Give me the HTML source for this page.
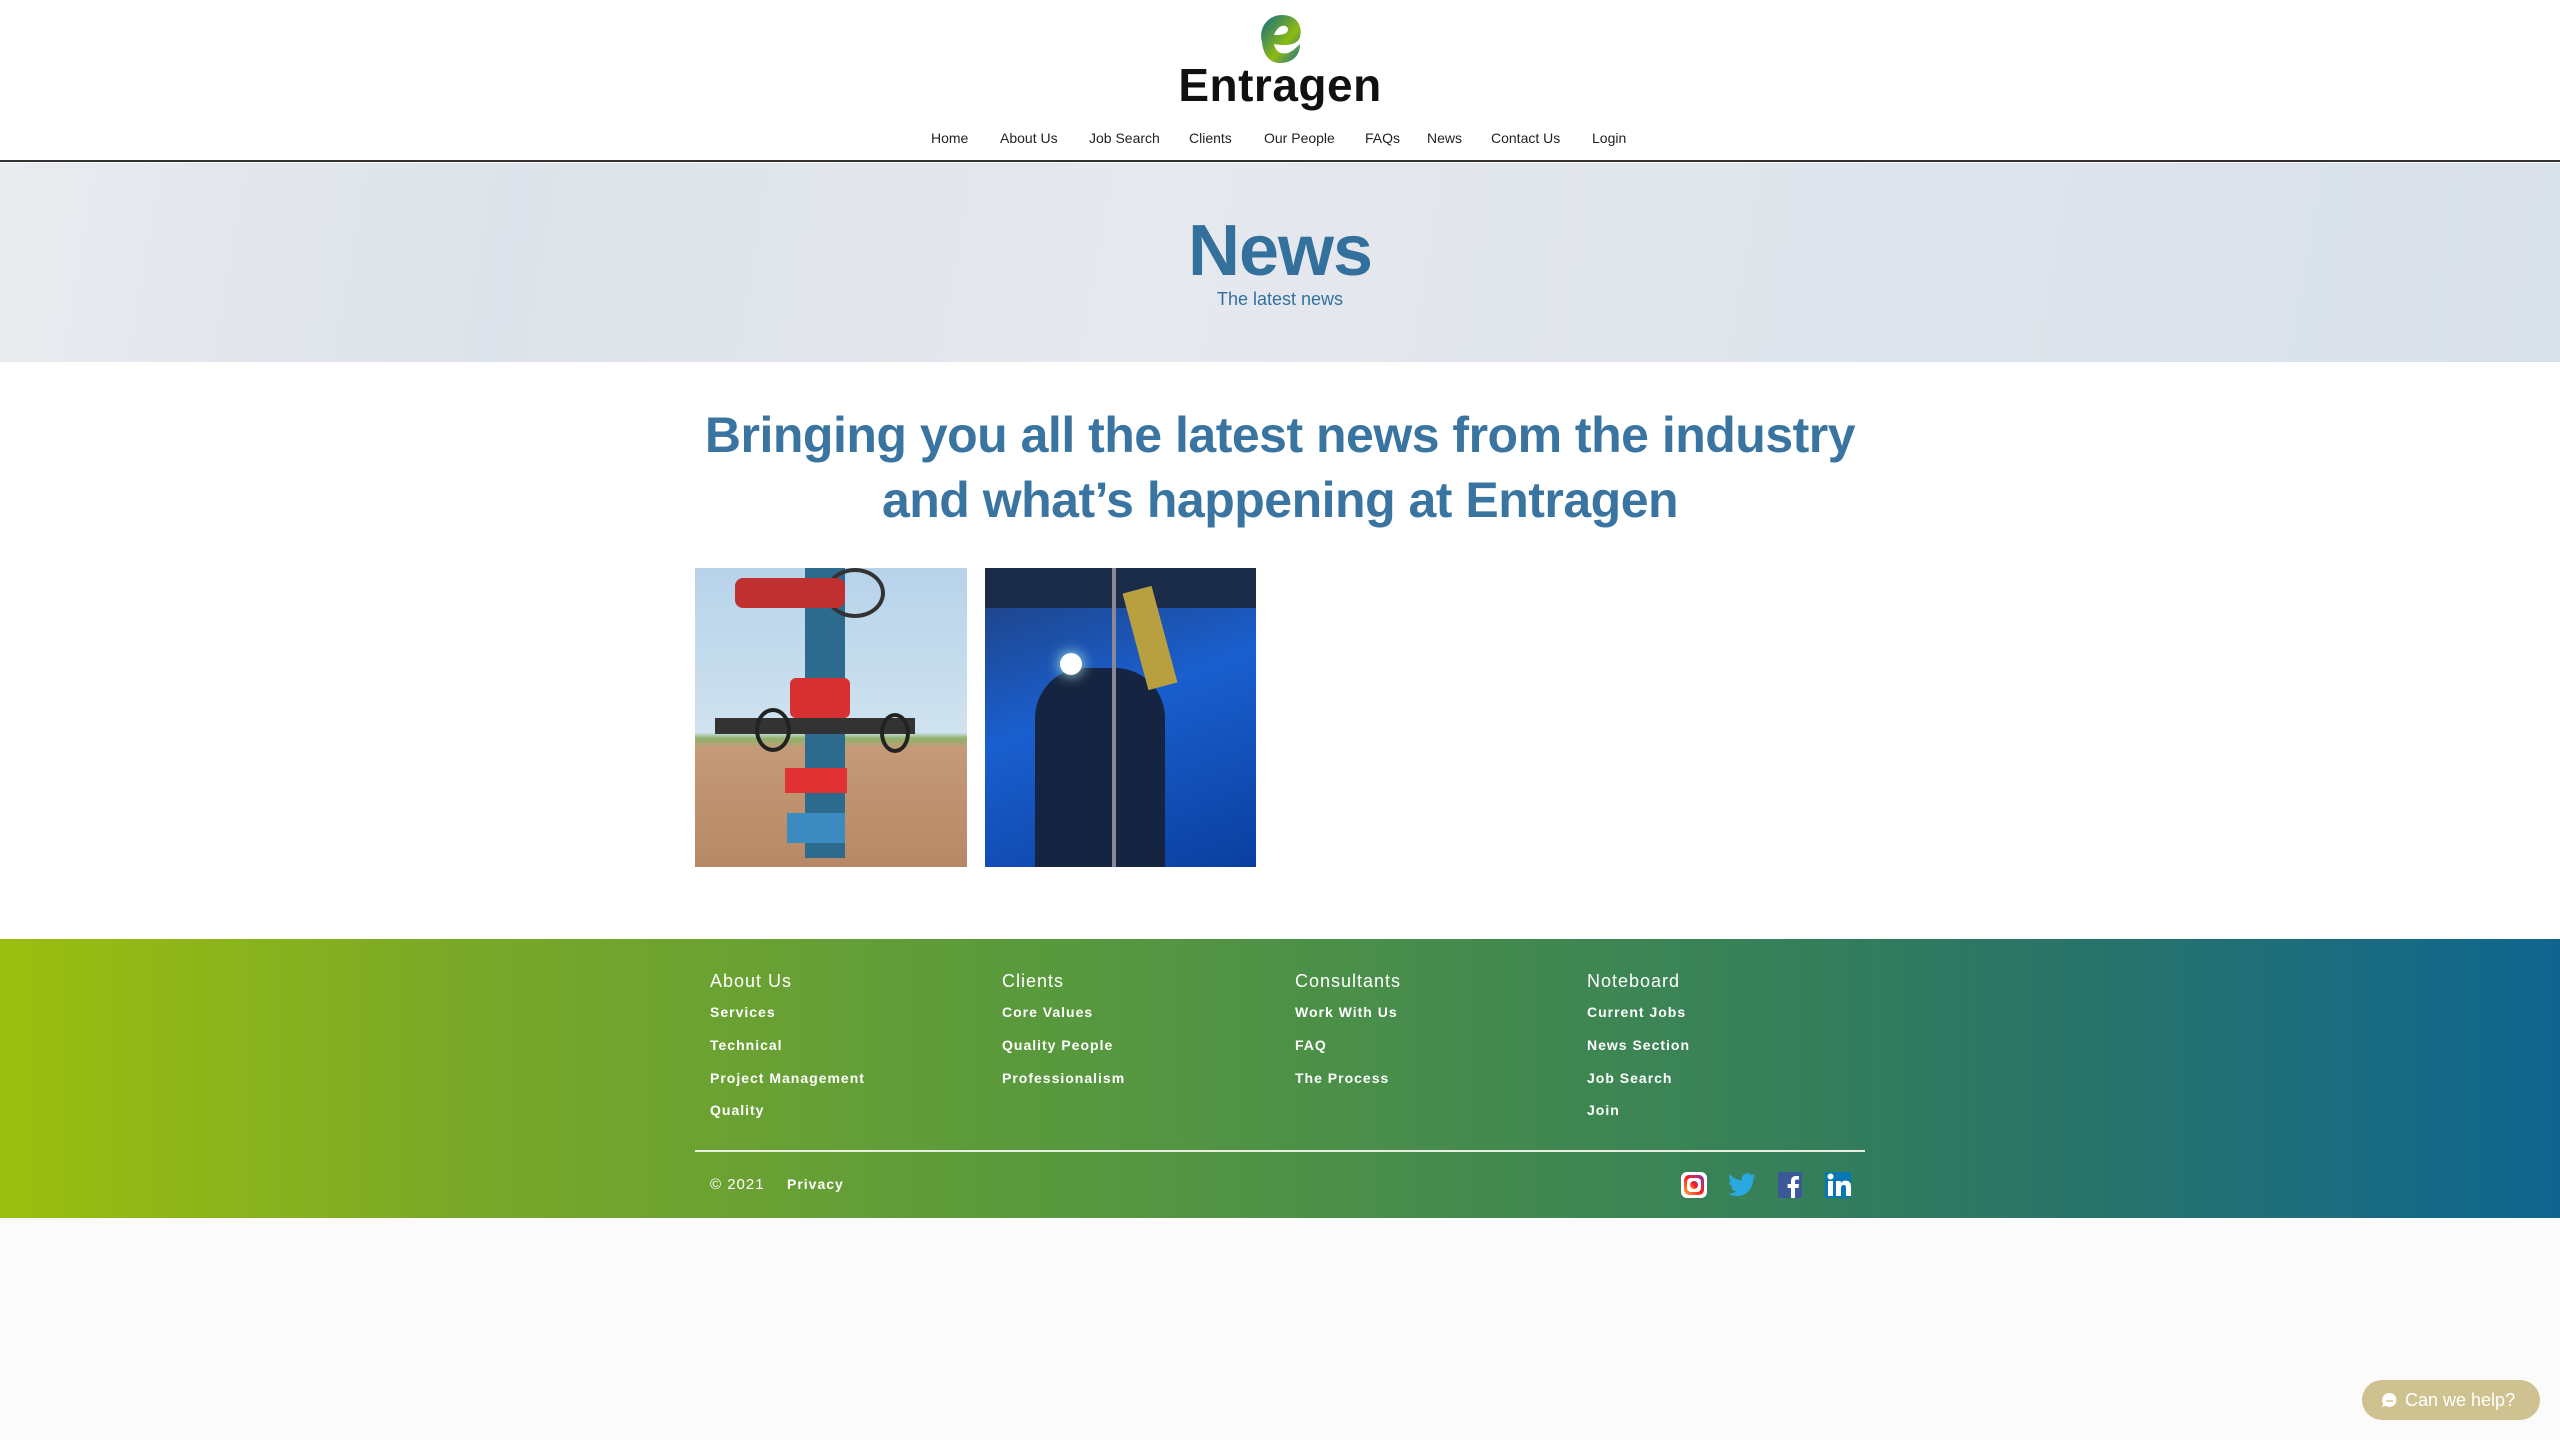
<!DOCTYPE html>
<html><head><meta charset="utf-8"><style>
*{margin:0;padding:0;box-sizing:border-box}
body{width:2560px;height:1440px;background:#fbfbfb;font-family:"Liberation Sans",sans-serif;position:relative;overflow:hidden}
.abs{position:absolute}
.main{position:absolute;left:0;top:362px;width:2560px;height:577px;background:#fff}
header{position:absolute;left:0;top:0;width:2560px;height:162px;background:#fff;border-bottom:2px solid #333}
.logo-t{position:absolute;left:1130px;top:58px;width:300px;text-align:center;font-size:46px;font-weight:bold;color:#111;letter-spacing:0.5px}
nav{position:absolute;top:130px;left:0;width:2560px;font-size:14px;color:#222}
nav span{position:absolute;top:0}
.hero{position:absolute;left:0;top:163px;width:2560px;height:199px;background:linear-gradient(100deg,#e9ebef 0%,#dde3ea 20%,#e6e9ee 45%,#dfe5ec 70%,#d8e0e8 100%)}
.hero h1{position:absolute;top:47px;width:100%;text-align:center;font-size:72px;color:#34709c;font-weight:bold;letter-spacing:-1px}
.hero p{position:absolute;top:126px;width:100%;text-align:center;font-size:18px;color:#34709c}
.big{position:absolute;left:680px;width:1200px;text-align:center;font-size:50px;font-weight:bold;color:#3a74a1;letter-spacing:-0.5px}
footer{position:absolute;left:0;top:939px;width:2560px;height:279px;background:linear-gradient(90deg,#9bbf0e 0%,#7aa828 18%,#5a9a3c 40%,#3b8455 65%,#2a7567 80%,#0f6590 100%);color:#fff}
.fh{position:absolute;top:32px;font-size:18px;letter-spacing:1px}
.fl{position:absolute;font-size:14px;font-weight:bold;letter-spacing:1px}
.chat{position:absolute;left:2362px;top:1380px;width:178px;height:40px;border-radius:20px;background:#cfc291;color:#fff;font-size:18px;line-height:40px;padding-left:43px}
</style></head><body>
<div class="main"></div>
<header>
<svg class="abs" style="left:1256px;top:14px" width="48" height="50" viewBox="0 0 48 50">
<defs><linearGradient id="g" x1="0" y1="0" x2="1" y2="1"><stop offset="0" stop-color="#0e6a8c"/><stop offset=".6" stop-color="#8dbb12"/><stop offset="1" stop-color="#1c6f93"/></linearGradient></defs>
<path d="M6 28 C2 14 12 1 26 1 C40 1 47 11 44 23 C41 32 28 32 18 30 C19 37 25 41 32 39 C37 37 41 33 44 30 C44 43 35 49 24 49 C13 49 7 40 6 28 Z M18 21 C27 21 32 20 32 15 C31 10 22 10 18 21 Z" fill="url(#g)" fill-rule="evenodd"/></svg>
<div class="logo-t">Entragen</div>
<nav>
<span style="left:931px">Home</span><span style="left:1000px">About Us</span><span style="left:1089px">Job Search</span><span style="left:1189px">Clients</span><span style="left:1264px">Our People</span><span style="left:1365px">FAQs</span><span style="left:1427px">News</span><span style="left:1491px">Contact Us</span><span style="left:1592px">Login</span>
</nav>
</header>
<div class="hero"><h1>News</h1><p>The latest news</p></div>
<div class="big" style="top:406px">Bringing you all the latest news from the industry</div>
<div class="big" style="top:471px">and what’s happening at Entragen</div>

<div class="abs" style="left:695px;top:568px;width:272px;height:299px;overflow:hidden;background:linear-gradient(180deg,#b7d3ea 0%,#cfe2ef 55%,#8fb36b 57%,#c49a78 60%,#b88866 100%)">
<div class="abs" style="left:110px;top:0;width:40px;height:290px;background:#2c6a8e"></div>
<div class="abs" style="left:95px;top:110px;width:60px;height:40px;background:#d63030;border-radius:6px"></div>
<div class="abs" style="left:90px;top:200px;width:62px;height:25px;background:#e03232"></div>
<div class="abs" style="left:92px;top:245px;width:58px;height:30px;background:#3b8ac0"></div>
<div class="abs" style="left:20px;top:150px;width:200px;height:16px;background:#333"></div>
<div class="abs" style="left:60px;top:140px;width:36px;height:44px;border:4px solid #222;border-radius:50%"></div>
<div class="abs" style="left:185px;top:145px;width:30px;height:40px;border:4px solid #222;border-radius:50%"></div>
<div class="abs" style="left:130px;top:0;width:60px;height:50px;border:4px solid #333;border-radius:50%"></div>
<div class="abs" style="left:40px;top:10px;width:110px;height:30px;background:#c03030;border-radius:8px"></div>
</div>
<div class="abs" style="left:985px;top:568px;width:271px;height:299px;overflow:hidden;background:linear-gradient(160deg,#1f3f7a 0%,#1a5fcf 45%,#0a3fa0 100%)">
<div class="abs" style="left:0;top:0;width:271px;height:40px;background:#1a2c48"></div>
<div class="abs" style="left:50px;top:100px;width:130px;height:199px;background:#152440;border-radius:50px 50px 0 0"></div>
<div class="abs" style="left:75px;top:85px;width:22px;height:22px;background:#fff;border-radius:50%;box-shadow:0 0 14px #bfe"></div>
<div class="abs" style="left:127px;top:0;width:4px;height:299px;background:#889"></div>
<div class="abs" style="left:150px;top:20px;width:30px;height:100px;background:#b8a040;transform:rotate(-15deg)"></div>
</div>

<footer>
<div class="fh" style="left:710px">About Us</div><div class="fh" style="left:1002px">Clients</div><div class="fh" style="left:1295px">Consultants</div><div class="fh" style="left:1587px">Noteboard</div>
<div class="fl" style="left:710px;top:65px">Services</div><div class="fl" style="left:710px;top:98px">Technical</div><div class="fl" style="left:710px;top:131px">Project Management</div><div class="fl" style="left:710px;top:163px">Quality</div>
<div class="fl" style="left:1002px;top:65px">Core Values</div><div class="fl" style="left:1002px;top:98px">Quality People</div><div class="fl" style="left:1002px;top:131px">Professionalism</div>
<div class="fl" style="left:1295px;top:65px">Work With Us</div><div class="fl" style="left:1295px;top:98px">FAQ</div><div class="fl" style="left:1295px;top:131px">The Process</div>
<div class="fl" style="left:1587px;top:65px">Current Jobs</div><div class="fl" style="left:1587px;top:98px">News Section</div><div class="fl" style="left:1587px;top:131px">Job Search</div><div class="fl" style="left:1587px;top:163px">Join</div>
<div class="abs" style="left:695px;top:211px;width:1170px;height:2px;background:#e8efe0"></div>
<div class="abs" style="left:710px;top:237px;font-size:15px;letter-spacing:1px">© 2021</div>
<div class="fl" style="left:787px;top:237px">Privacy</div>
<svg class="abs" style="left:1681px;top:233px" width="26" height="26" viewBox="0 0 26 26"><defs><linearGradient id="ig" x1="0" y1="1" x2="1" y2="0"><stop offset="0" stop-color="#fcb045"/><stop offset=".5" stop-color="#fd1d1d"/><stop offset="1" stop-color="#833ab4"/></linearGradient></defs><rect width="26" height="26" rx="6" fill="#fff"/><rect x="3" y="3" width="20" height="20" rx="5" fill="url(#ig)"/><rect x="6" y="6" width="14" height="14" rx="4" fill="#fff"/><circle cx="13" cy="13" r="4" fill="url(#ig)"/></svg>
<svg class="abs" style="left:1728px;top:234px" width="28" height="24" viewBox="0 0 24 20"><path d="M24 2.4a10 10 0 0 1-2.8.8A5 5 0 0 0 23.3.4a10 10 0 0 1-3.1 1.2A4.9 4.9 0 0 0 11.8 6 14 14 0 0 1 1.7.9a4.9 4.9 0 0 0 1.5 6.6A4.9 4.9 0 0 1 1 6.9 4.9 4.9 0 0 0 4.9 11.8a5 5 0 0 1-2.2.1 4.9 4.9 0 0 0 4.6 3.4A9.9 9.9 0 0 1 0 17.3 14 14 0 0 0 7.5 19.5c9.1 0 14-7.5 14-14v-.6A10 10 0 0 0 24 2.4z" fill="#2aa9e0"/></svg>
<svg class="abs" style="left:1778px;top:233px" width="24" height="26" viewBox="0 0 24 26"><rect width="24" height="26" fill="#3b5998"/><path d="M17 26V16h3.5l.5-4h-4V9.5c0-1.1.3-1.9 1.9-1.9H21V4.1c-.4 0-1.6-.1-3-.1-3 0-5 1.8-5 5.1V12H9.6v4H13v10z" fill="#fff"/></svg>
<svg class="abs" style="left:1825px;top:233px" width="26" height="26" viewBox="0 0 26 26"><rect width="26" height="26" fill="#0a77b5"/><rect x="3" y="9" width="5" height="15" fill="#fff"/><circle cx="5.5" cy="4.5" r="3" fill="#fff"/><path d="M11 9h4.8v2.2c.8-1.4 2.4-2.6 4.8-2.6 4 0 5.4 2.4 5.4 6.6V24h-5v-7.8c0-1.8-.4-3.2-2.2-3.2s-2.8 1.3-2.8 3.3V24H11z" fill="#fff"/></svg>
</footer>
<div class="chat"><svg class="abs" style="left:19px;top:12px" width="17" height="17" viewBox="0 0 17 17"><path d="M8.5 1a7 7 0 1 1-4 12.8L1 15l1.3-3.2A7 7 0 0 1 8.5 1z" fill="#fff"/><path d="M5 9h7" stroke="#cfc291" stroke-width="1.5"/></svg>Can we help?</div>
</body></html>
